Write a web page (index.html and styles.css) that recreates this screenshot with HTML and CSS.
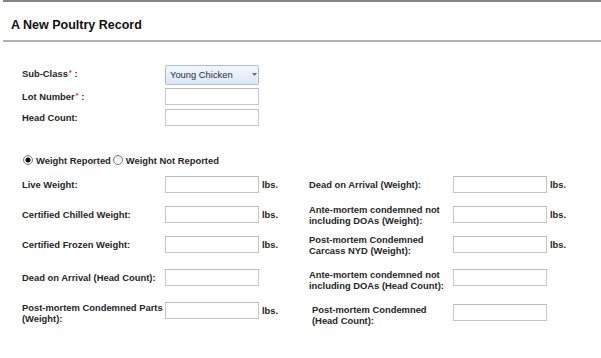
FILE: index.html
```html
<!DOCTYPE html>
<html lang="en">
<head>
    <meta charset="UTF-8">
    <meta name="viewport" content="width=device-width, initial-scale=1.0">
    <title>A New Poultry Record</title>
    <link rel="stylesheet" href="styles.css">
</head>
<body>

<div class="page">
    <h2 class="title">A New Poultry Record</h2>

    <div class="form-top">
        <label class="lbl">Sub-Class<span class="req">*</span> :</label>
        <span class="select-wrap">
            <select class="dropdown">
                <option>Young Chicken</option>
            </select>
            <svg class="arrow" width="5" height="3" viewBox="0 0 5 3"><path d="M0 0h5L2.5 3z" fill="#6b6b6b"/></svg>
        </span>

        <label class="lbl">Lot Number<span class="req">*</span> :</label>
        <input type="text" class="txt">

        <label class="lbl">Head Count:</label>
        <input type="text" class="txt">
    </div>

    <div class="radio-row">
        <label><input type="radio" name="wr" checked> Weight Reported</label>
        <label><input type="radio" name="wr"> Weight Not Reported</label>
    </div>

    <div class="fields">
        <div class="field-row">
            <label class="lbl">Live Weight:</label>
            <input type="text" class="txt">
            <span class="unit">lbs.</span>
            <label class="lbl">Dead on Arrival (Weight):</label>
            <input type="text" class="txt">
            <span class="unit">lbs.</span>
        </div>
        <div class="field-row">
            <label class="lbl">Certified Chilled Weight:</label>
            <input type="text" class="txt">
            <span class="unit">lbs.</span>
            <label class="lbl">Ante-mortem condemned not including DOAs (Weight):</label>
            <input type="text" class="txt">
            <span class="unit">lbs.</span>
        </div>
        <div class="field-row">
            <label class="lbl">Certified Frozen Weight:</label>
            <input type="text" class="txt">
            <span class="unit">lbs.</span>
            <label class="lbl">Post-mortem Condemned Carcass NYD (Weight):</label>
            <input type="text" class="txt">
            <span class="unit">lbs.</span>
        </div>
        <div class="field-row spaced">
            <label class="lbl">Dead on Arrival (Head Count):</label>
            <input type="text" class="txt">
            <span class="unit"></span>
            <label class="lbl low">Ante-mortem condemned not including DOAs (Head Count):</label>
            <input type="text" class="txt">
            <span class="unit"></span>
        </div>
        <div class="field-row spaced">
            <label class="lbl low">Post-mortem Condemned Parts (Weight):</label>
            <input type="text" class="txt">
            <span class="unit">lbs.</span>
            <label class="lbl indent low">Post-mortem Condemned<br>(Head Count):</label>
            <input type="text" class="txt shift">
            <span class="unit"></span>
        </div>
    </div>
</div>

</body>
</html>
```

FILE: styles.css
```css
body {
    margin: 0;
    background-color: #ffffff;
    font-family: "Liberation Sans", Arial, sans-serif;
    color: #222;
}
.page {
    margin-left: 3px;
    border-top: 2px solid #858585;
    min-height: 356px;
}
.title {
    margin: 0;
    padding: 16px 0 7px 8px;
    font-size: 12.5px;
    line-height: 15px;
    font-weight: bold;
    color: #111;
    border-bottom: 2px solid #b2b2b2;
}
.lbl {
    font-size: 9.4px;
    line-height: 11px;
    font-weight: bold;
    color: #262626;
}
.req {
    color: #e02b2b;
    font-size: 8px;
    position: relative;
    top: -2px;
    margin-left: 1px;
}
.form-top {
    display: grid;
    grid-template-columns: 143px 94px;
    grid-template-rows: 20px 17px 17px;
    row-gap: 4px;
    align-items: center;
    margin-top: 22px;
    padding-left: 19px;
}
.select-wrap {
    position: relative;
    display: block;
    height: 20px;
}
.dropdown {
    appearance: none;
    -webkit-appearance: none;
    width: 94px;
    height: 20px;
    margin: 0;
    padding: 0 0 0 4px;
    border: 1px solid #a8bfdc;
    border-radius: 2px;
    background: linear-gradient(#f3f7fd, #dce7f5);
    font-family: "Liberation Sans", Arial, sans-serif;
    font-size: 9.4px;
    color: #1c2f4a;
    outline: none;
}
.arrow {
    position: absolute;
    left: 87px;
    top: 9px;
}
.txt {
    box-sizing: border-box;
    width: 94px;
    height: 17px;
    margin: 0;
    padding: 0 2px;
    border: 1px solid #c6c6c6;
    border-top-color: #bdbdbd;
    background-color: #fff;
    outline: none;
}
.radio-row {
    display: flex;
    align-items: center;
    gap: 2px;
    margin-top: 27px;
    padding-left: 20px;
    height: 14px;
    font-size: 9.4px;
    font-weight: bold;
    color: #262626;
}
.radio-row label {
    display: flex;
    align-items: center;
    gap: 3px;
}
.radio-row input {
    appearance: none;
    -webkit-appearance: none;
    box-sizing: border-box;
    width: 10px;
    height: 10px;
    margin: 0;
    border: 1px solid #7d7d7d;
    border-radius: 50%;
    background: linear-gradient(#e9e9e9, #ffffff);
}
.radio-row input:checked {
    background: radial-gradient(circle, #111 0, #111 2.3px, #f4f4f4 2.8px);
}
.fields {
    padding-left: 19px;
}
.field-row {
    display: grid;
    grid-template-columns: 143px 94px 50px 144px 94px auto;
    grid-template-rows: 17px;
    align-items: center;
    margin-top: 13px;
}
.field-row:first-child {
    margin-top: 9px;
}
.field-row.spaced {
    margin-top: 16px;
}
.unit {
    padding-left: 3px;
    font-size: 9.4px;
    font-weight: bold;
    color: #262626;
}
.low {
    position: relative;
    top: 2px;
}
.indent {
    padding-left: 3px;
    top: 4px;
}
.shift {
    position: relative;
    top: 2px;
}
```
